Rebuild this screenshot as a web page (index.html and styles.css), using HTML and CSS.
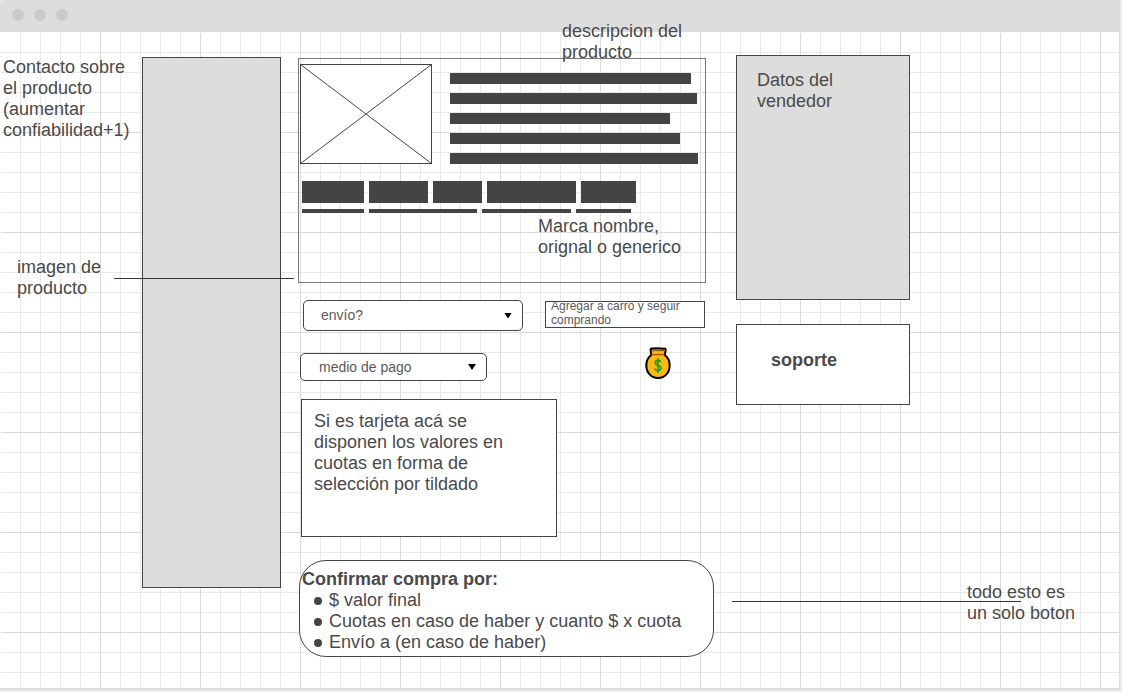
FILE: index.html
```html
<!DOCTYPE html>
<html lang="es">
<head>
<meta charset="utf-8">
<title>Wireframe de producto</title>
<link rel="stylesheet" href="styles.css">
</head>
<body>
<div class="window">
  <header class="titlebar"><i class="dot"></i><i class="dot"></i><i class="dot"></i></header>
  <main class="board">
    <aside class="notes">
      <p class="note-contact">Contacto sobre<br>el producto<br>(aumentar<br>confiabilidad+1)</p>
      <p class="note-image">imagen de<br>producto</p>
    </aside>

    <div class="gallery"><div class="gallery-panel"></div></div>

    <section class="detail">
      <article class="card">
        <p class="card-label">descripcion del<br>producto</p>
        <div class="card-top">
          <svg class="thumb" viewBox="0 0 132 100" preserveAspectRatio="none" aria-hidden="true">
            <rect x="0.5" y="0.5" width="131" height="99" fill="#fff" stroke="#444"/>
            <path d="M.5.5l131 99M131.500.5l-131 99" stroke="#444" fill="none"/>
          </svg>
          <div class="lines">
            <i class="w241"></i><i class="w247"></i><i class="w220"></i><i class="w230"></i><i class="w248"></i>
          </div>
        </div>
        <div class="blocks"><i class="w62"></i><i class="w59"></i><i class="w49"></i><i class="w89"></i><i class="w55"></i></div>
        <div class="blocks thin"><i class="w62"></i><i class="w108"></i><i class="w89"></i><i class="w55"></i></div>
        <p class="brand">Marca nombre,<br>orignal o generico</p>
      </article>

      <div class="row row-shipping">
        <div class="picker shipping">
          <select aria-label="envío"><option>envío?</option></select>
        </div>
        <button class="add" type="button"><span>Agregar a carro y seguir comprando</span></button>
      </div>

      <div class="row row-payment">
        <div class="picker payment">
          <select aria-label="medio de pago"><option>medio de pago</option></select>
        </div>
        <svg class="bag" viewBox="0 0 26 32" aria-hidden="true">
          <path d="M5.600 2.600C5.600 1.300 7 1.500 8 1.600c1.200-.4 2.200-.3 3.200-.1 1.200-.2 2.400-.2 3.600 0 1.200-.2 2.200-.2 3.300.2 1.600-.3 2.800-.2 2.600 1.200L19.800 8c3 2.300 4.900 5.900 4.900 10.200C24.700 25.600 19.800 31 13 31S1.300 25.600 1.300 18.200C1.300 13.900 3.200 10.300 6.200 8z" fill="#fdb813" stroke="#000" stroke-width="2" stroke-linejoin="round"/>
          <path d="M6.500 7.600h13" stroke="#a85a10" stroke-width="1.500"/>
          <path d="M7 3l1.500 1L10 3l1.500 1L13 3l1.500 1L16 3l1.500 1L19 3" stroke="#6b3c08" stroke-width="1" fill="none"/>
          <path d="M15.800 15.300c-.5-1.400-1.500-1.900-2.800-1.900-1.600 0-2.700.9-2.700 2.300 0 3.300 5.600 1.800 5.600 5.400 0 1.600-1.200 2.500-2.900 2.500-1.500 0-2.600-.7-3-2.200M13 11v15" stroke="#2e9b1c" stroke-width="1.800" fill="none"/>
        </svg>
      </div>

      <div class="installments">Si es tarjeta acá se<br>disponen los valores en<br>cuotas en forma de<br>selección por tildado</div>

      <button class="confirm" type="button">
        <strong>Confirmar compra por:</strong>
        <span class="item">$ valor final</span>
        <span class="item">Cuotas en caso de haber y cuanto $ x cuota</span>
        <span class="item">Envío a (en caso de haber)</span>
      </button>
    </section>

    <aside class="side">
      <section class="seller">Datos del<br>vendedor</section>
      <section class="support">soporte</section>
    </aside>

    <aside class="notes-right"><p>todo esto es<br>un solo boton</p></aside>

    <i class="pointer pointer-image"></i>
    <i class="pointer pointer-button"></i>
  </main>
</div>
</body>
</html>
```
FILE: styles.css
```css
* { box-sizing: border-box; }

body {
  margin: 0;
  background: #ececec;
  color: #4a4a4a;
  font: 18px/21px "Liberation Sans", Arial, sans-serif;
}

p { margin: 0; }
i { display: block; }

button, select {
  margin: 0;
  color: inherit;
  font: inherit;
  text-align: left;
  border: 1px solid #444;
  background: #fff;
}

.window {
  display: flex;
  flex-direction: column;
  min-height: calc(100vh - 2px);
  margin-right: 2px;
  border-right: 1px solid #ddd;
  border-bottom: 2px solid #ddd;
}

.titlebar {
  display: flex;
  gap: 10px;
  height: 32px;
  padding: 9px 12px;
  background: #ddd;
  border-top-left-radius: 4px;
}

.dot {
  width: 12px;
  height: 12px;
  border-radius: 50%;
  background: #cbcbcb;
}

.board {
  position: relative;
  flex: 1;
  display: grid;
  grid-template-columns: 142fr 156fr 438fr 174fr 209fr;
  align-items: start;
  background-color: #fff;
  background-image:
    linear-gradient(90deg, #dadada 1px, transparent 1px),
    linear-gradient(#dadada 1px, transparent 1px),
    linear-gradient(90deg, #e9e9e9 1px, transparent 1px),
    linear-gradient(#e9e9e9 1px, transparent 1px);
  background-size: 100px 100px, 100px 100px, 20px 20px, 20px 20px;
  box-shadow: inset 1px 1px #fff;
}

.notes { padding: 25px 0 0 3px; white-space: nowrap; }
.note-image { margin: 116px 0 0 14px; }

.gallery { padding: 25px 17px 0 0; }
.gallery-panel {
  height: 531px;
  border: 1px solid #444;
  background: #ddd;
}

.detail { padding: 26px 22px 0 0; }

.card {
  position: relative;
  height: 225px;
  margin-right: 8px;
  padding: 5px 1px;
  border: 1px solid #777;
}
.card-label { position: absolute; left: 263px; top: -38px; white-space: nowrap; }
.card-top { display: flex; gap: 18px; }
.thumb { width: 132px; height: 100px; flex: none; }
.lines { display: grid; gap: 9px; padding-top: 9px; align-content: start; }
.lines i { height: 11px; background: #444; }

.blocks { display: flex; gap: 5px; margin: 17px 0 0 2px; }
.blocks i { height: 22px; background: #444; }
.blocks.thin { margin-top: 6px; }
.blocks.thin i { height: 4px; }

.w49 { width: 49px; }
.w55 { width: 55px; }
.w59 { width: 59px; }
.w62 { width: 62px; }
.w89 { width: 89px; }
.w108 { width: 108px; }
.w220 { width: 220px; }
.w230 { width: 230px; }
.w241 { width: 241px; }
.w247 { width: 247px; }
.w248 { width: 248px; }

.brand { margin: 3px 0 0 238px; white-space: nowrap; }

.row { display: flex; }
.row-shipping { margin: 17px 9px 0 5px; gap: 22px; }
.row-payment { margin: 16px 0 0 2px; gap: 158px; }

.picker { position: relative; font-size: 14px; color: #5a5a5a; }
.picker select {
  display: block;
  width: 100%;
  height: 100%;
  padding: 0 24px 0 17px;
  border-radius: 5px;
  appearance: none;
}
.picker::after {
  content: "";
  position: absolute;
  right: 11px;
  top: calc(50% - 3px);
  width: 8px;
  height: 6px;
  background: #000;
  clip-path: polygon(0 0, 100% 0, 50% 100%);
  pointer-events: none;
}
.shipping { width: 220px; height: 31px; }
.payment { width: 187px; height: 28px; margin-top: 6px; }
.payment select { padding-left: 18px; }

.add {
  display: flex;
  flex: 1;
  align-items: flex-end;
  height: 27px;
  margin-top: 1px;
  padding: 0 5px;
  color: #5a5a5a;
  font-size: 12px;
  line-height: 14px;
}

.bag { width: 26px; height: 32px; }

.installments {
  width: 256px;
  height: 138px;
  margin: 18px 0 0 3px;
  padding: 11px 12px;
  border: 1px solid #444;
  background: #fff;
}

.confirm {
  display: block;
  width: calc(100% - 1px);
  margin: 23px 0 0 1px;
  padding: 8px 2px 3px;
  border-radius: 27px;
  white-space: nowrap;
}
.confirm strong { display: block; }
.item { display: flex; align-items: center; gap: 7px; padding-left: 12px; }
.item::before {
  content: "";
  width: 8px;
  height: 8px;
  border-radius: 50%;
  background: #444;
}

.side { display: grid; gap: 24px; padding-top: 23px; }
.seller {
  height: 245px;
  padding: 14px 20px;
  border: 1px solid #444;
  background: #ddd;
}
.support {
  height: 81px;
  padding: 25px 34px;
  border: 1px solid #444;
  background: #fff;
  font-weight: bold;
}

.notes-right { padding: 550px 0 0 57px; white-space: nowrap; }

/* Pointer lines drawn over the board */
.pointer { position: absolute; height: 1px; background: #333; }
.pointer-image { left: 114px; top: 246px; width: 180px; }
.pointer-button { left: 732px; top: 569px; width: 289px; }
```
